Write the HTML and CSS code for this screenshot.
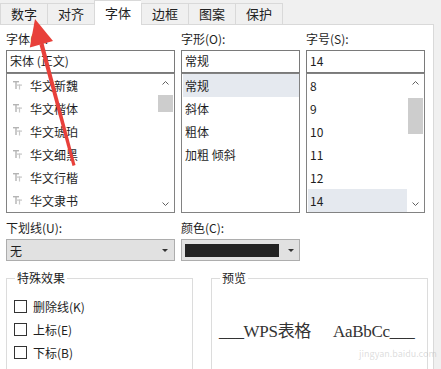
FILE: index.html
```html
<!DOCTYPE html>
<html lang="zh-CN">
<head>
    <meta charset="UTF-8" />
    <title>单元格格式 - 字体</title>
    <link rel="stylesheet" href="styles.css">
</head>
<body>
    <div class="tabs">
        <div class="tab">数字</div>
        <div class="tab">对齐</div>
        <div class="tab active">字体</div>
        <div class="tab">边框</div>
        <div class="tab">图案</div>
        <div class="tab last">保护</div>
    </div>
    <div class="panel">
        <div class="fields">
            <label class="label">字体(F):</label>
            <label class="label">字形(O):</label>
            <label class="label">字号(S):</label>

            <div class="combo">
                <div class="input">宋体 (正文)</div>
                <div class="list">
                    <ul class="items font-items" id="font-list"></ul>
                    <div class="scrollbar">
                        <div class="arrow"><svg width="7" height="4" viewBox="0 0 7 4"><polyline points="0.5,3.5 3.5,0.5 6.5,3.5" fill="none" stroke="#606060"/></svg></div>
                        <div class="track"><div class="thumb font-thumb"></div></div>
                        <div class="arrow"><svg width="7" height="4" viewBox="0 0 7 4"><polyline points="0.5,0.5 3.5,3.5 6.5,0.5" fill="none" stroke="#606060"/></svg></div>
                    </div>
                </div>
            </div>

            <div class="combo">
                <div class="input">常规</div>
                <div class="list">
                    <ul class="items">
                        <li class="selected">常规</li>
                        <li>斜体</li>
                        <li>粗体</li>
                        <li>加粗 倾斜</li>
                    </ul>
                </div>
            </div>

            <div class="combo">
                <div class="input">14</div>
                <div class="list">
                    <ul class="items">
                        <li>8</li>
                        <li>9</li>
                        <li>10</li>
                        <li>11</li>
                        <li>12</li>
                        <li class="selected">14</li>
                    </ul>
                    <div class="scrollbar">
                        <div class="arrow"><svg width="7" height="4" viewBox="0 0 7 4"><polyline points="0.5,3.5 3.5,0.5 6.5,3.5" fill="none" stroke="#606060"/></svg></div>
                        <div class="track"><div class="thumb size-thumb"></div></div>
                        <div class="arrow"><svg width="7" height="4" viewBox="0 0 7 4"><polyline points="0.5,0.5 3.5,3.5 6.5,0.5" fill="none" stroke="#606060"/></svg></div>
                    </div>
                </div>
            </div>
        </div>

        <div class="row2">
            <div>
                <label class="label">下划线(U):</label>
                <div class="select underline-select">
                    <span>无</span>
                    <span class="caret"></span>
                </div>
            </div>
            <div>
                <label class="label">颜色(C):</label>
                <div class="select color-select">
                    <span class="swatch"></span>
                    <span class="caret"></span>
                </div>
            </div>
        </div>

        <div class="groups">
            <fieldset class="group effects">
                <legend>特殊效果</legend>
                <div class="check"><span class="box"></span>删除线(K)</div>
                <div class="check"><span class="box"></span>上标(E)</div>
                <div class="check"><span class="box"></span>下标(B)</div>
            </fieldset>
            <fieldset class="group preview">
                <legend>预览</legend>
                <div class="sample">___WPS表格<span class="space"></span>AaBbCc___</div>
                <div class="watermark">jingyan.baidu.com</div>
            </fieldset>
        </div>
    </div>

    <!-- red annotation arrow pointing at the 数字 tab -->
    <svg class="annotation" width="441" height="369" viewBox="0 0 441 369">
        <polygon points="72.5,166 75.5,165 43.6,43.5 39.4,44.5" fill="#e8403a"/>
        <polygon points="35,19 53,41 29.8,47.5" fill="#e8403a"/>
    </svg>

    <script>
        // font names shown in the font list
        const fonts = ['华文新魏', '华文楷体', '华文琥珀', '华文细黑', '华文行楷', '华文隶书'];
        const fontList = document.getElementById('font-list');

        fonts.forEach(name => {
            const li = document.createElement('li');
            li.innerHTML = `
                <svg class="tt" width="9" height="9" viewBox="0 0 9 9">
                    <rect x="0" y="0" width="6" height="1.4" fill="#b4b4b4"/>
                    <rect x="2.3" y="0" width="1.4" height="8" fill="#b4b4b4"/>
                    <rect x="4" y="3.5" width="5" height="1.2" fill="#c8c8c8"/>
                    <rect x="5.9" y="3.5" width="1.2" height="5" fill="#c8c8c8"/>
                </svg>${name}`;
            fontList.appendChild(li);
        });
    </script>
</body>
</html>
```

FILE: styles.css
```css
:root {
    --panel-border: #d9d9d9;
    --field-border: #828282;
    --text: #1e1e1e;
    --select-bg: #e1e1e1;
    --highlight: #e5e9ef;
}
* {
    margin: 0;
    padding: 0;
    box-sizing: border-box;
}
body {
    width: 441px;
    height: 369px;
    overflow: hidden;
    background-color: #f0f0f0;
    color: var(--text);
    font-family: "Noto Sans CJK SC", "Noto Sans", sans-serif;
    font-size: 12px;
    position: relative;
}
/* Tabs */
.tabs {
    display: flex;
    align-items: flex-end;
    height: 24px;
}
.tab {
    height: 21px;
    padding: 0 10px;
    font-size: 13px;
    line-height: 20px;
    border: 1px solid var(--panel-border);
    border-right: none;
    border-bottom: none;
    background-color: #f0f0f0;
    color: #222;
}
.tab.last {
    border-right: 1px solid var(--panel-border);
}
.tab.active {
    height: 25px;
    line-height: 23px;
    margin-bottom: -1px;
    background-color: #fff;
    position: relative;
    z-index: 1;
}
/* Panel */
.panel {
    width: 434px;
    height: 345px;
    background-color: #fff;
    border-top: 1px solid var(--panel-border);
    border-right: 1px solid var(--panel-border);
    padding: 5px 0 0 6px;
}
.label {
    display: block;
    height: 18px;
    line-height: 18px;
    margin-bottom: 2px;
}
.fields {
    display: grid;
    grid-template-columns: 169px 119px 119px;
    column-gap: 6px;
}
.input {
    height: 23px;
    border: 1px solid #7a7a7a;
    line-height: 20px;
    padding-left: 3px;
}
.list {
    display: flex;
    height: 140px;
    border: 1px solid var(--field-border);
}
.items {
    flex: 1;
    list-style: none;
    padding-left: 1px;
}
.items li {
    height: 23px;
    line-height: 23px;
    padding-left: 2px;
}
.items li.selected {
    background-color: var(--highlight);
}
.font-items li {
    display: flex;
    align-items: center;
    padding-left: 5px;
}
.tt {
    margin-right: 8px;
}
.scrollbar {
    width: 17px;
    display: flex;
    flex-direction: column;
}
.arrow {
    height: 17px;
    display: flex;
    align-items: center;
    justify-content: center;
}
.track {
    flex: 1;
}
.thumb {
    background-color: #cdcdcd;
    margin: 0 1px;
}
.font-thumb {
    margin-top: 4px;
    height: 17px;
}
.size-thumb {
    margin-top: 7px;
    height: 36px;
}
/* Underline / colour row */
.row2 {
    display: grid;
    grid-template-columns: 169px 119px;
    column-gap: 6px;
    margin-top: 6px;
}
.select {
    height: 22px;
    border: 1px solid #adadad;
    background-color: var(--select-bg);
    display: flex;
    align-items: center;
    padding-left: 3px;
}
.select .caret {
    margin-left: auto;
    margin-right: 6px;
    border-left: 3px solid transparent;
    border-right: 3px solid transparent;
    border-top: 3px solid #333;
}
.swatch {
    width: 94px;
    height: 13px;
    background-color: #222;
}
.color-select .caret {
    margin-right: 5px;
}
/* Groups */
.groups {
    display: flex;
    gap: 18px;
    margin-top: 8px;
}
.group {
    border: 1px solid #dcdcdc;
    height: 112px;
    padding: 0 7px;
    flex-shrink: 0;
    min-width: 0;
}
.group legend {
    margin-left: 1px;
    padding: 0 2px;
    line-height: 18px;
    color: #222;
}
.effects {
    width: 187px;
    padding-top: 8px;
}
.check {
    display: flex;
    align-items: center;
    height: 23px;
}
.box {
    width: 13px;
    height: 13px;
    border: 1px solid #333;
    margin-right: 6px;
}
.preview {
    width: 217px;
}
.sample {
    margin-top: 33px;
    line-height: 24px;
    font-family: "Liberation Serif", "Noto Sans CJK SC", serif;
    font-size: 17px;
    letter-spacing: -0.3px;
    color: #333;
    white-space: nowrap;
}
.space {
    display: inline-block;
    width: 22px;
}
.watermark {
    margin: 4px 0 0 140px;
    font-size: 9px;
    line-height: 12px;
    white-space: nowrap;
    color: rgba(170, 170, 170, 0.4);
}
/* Annotation overlay */
.annotation {
    position: absolute;
    left: 0;
    top: 0;
    pointer-events: none;
    z-index: 5;
}
```
